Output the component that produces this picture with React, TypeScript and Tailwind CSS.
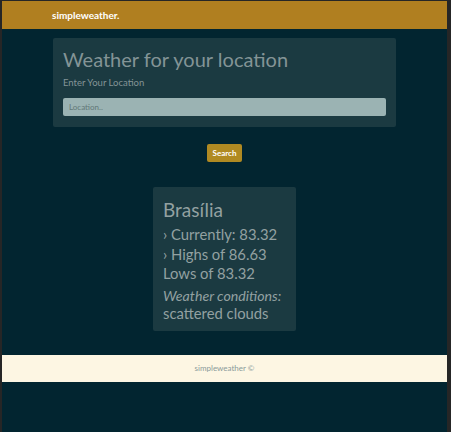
export default function App() {
  const font = { fontFamily: 'Lato, "Open Sans", sans-serif' }
  return (
    <div className="h-[432px] w-full overflow-hidden bg-[#262626] pl-[2px] pr-[4px] pt-[1px]" style={font}>
      <div className="flex h-full flex-col bg-[#022530]">
        <header className="flex h-[28px] items-center bg-[#b07f20] pl-[50px] pt-[1px]">
          <span className="text-[10px] font-bold text-white">simpleweather.</span>
        </header>

        <section className="mx-[51px] mt-[9px] rounded-[2px] bg-[#1b3a41] px-[10px] pb-[11px] pt-[8px]">
          <h1 className="text-[20px] leading-[26px] text-[#839496]">Weather for your location</h1>
          <p className="mt-[5px] text-[9.5px] leading-[12px] text-[#839496]">Enter Your Location</p>
          <input
            type="text"
            placeholder="Location.."
            className="mt-[9px] block h-[18px] w-full rounded-[2px] bg-[#9bb3b3] px-[6px] text-[8px] text-[#4f6666] outline-none placeholder:text-[#627878]"
          />
        </section>

        <div className="mt-[17px] flex justify-center">
          <button
            type="button"
            className="h-[18px] w-[35px] rounded-[2px] bg-[#b08a22] text-[8px] font-bold text-white"
          >
            Search
          </button>
        </div>

        <div className="mt-[25px] flex justify-center">
          <div className="w-[143px] whitespace-nowrap rounded-[2px] bg-[#1b3a41] px-[10px] pb-[10px] pt-[11px] text-[14.8px] leading-[19.5px] text-[#93a1a1]">
            <h2 className="mb-[3px] text-[19px] leading-[24px]">Brasília</h2>
            <p>› Currently: 83.32</p>
            <p>› Highs of 86.63</p>
            <p>Lows of 83.32</p>
            <p className="mt-[3px] text-[14.2px] italic leading-[18px]">Weather conditions:</p>
            <p className="leading-[16px]">scattered clouds</p>
          </div>
        </div>

        <footer className="mt-[24px] flex h-[27px] items-center justify-center bg-[#fdf6e3]">
          <span className="text-[8px] text-[#8a9a9a]">simpleweather ©</span>
        </footer>
      </div>
    </div>
  )
}
